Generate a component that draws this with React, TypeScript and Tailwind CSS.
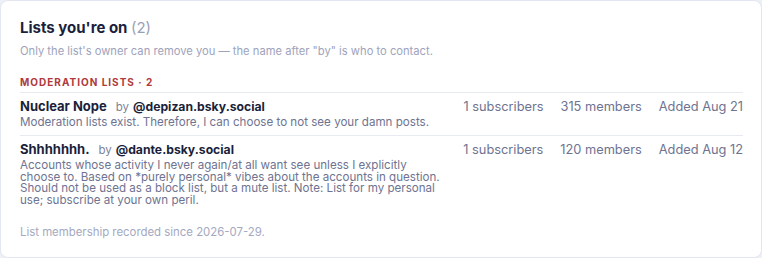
import React from "react";

const rows = [
  {
    name: "Nuclear Nope",
    by: "@depizan.bsky.social",
    desc: "Moderation lists exist. Therefore, I can choose to not see your damn posts.",
    subs: "1 subscribers",
    members: "315 members",
    added: "Added Aug 21",
  },
  {
    name: "Shhhhhhh.",
    by: "@dante.bsky.social",
    desc: "Accounts whose activity I never again/at all want see unless I explicitly choose to. Based on *purely personal* vibes about the accounts in question. Should not be used as a block list, but a mute list. Note: List for my personal use; subscribe at your own peril.",
    subs: "1 subscribers",
    members: "120 members",
    added: "Added Aug 12",
  },
];

export default function App() {
  return (
    <div className="w-[762px] h-[258px] bg-[#eef0f7]" style={{ fontFamily: "Inter, 'Noto Sans', sans-serif" }}>
      <div className="w-[762px] h-[258px] bg-white border border-[#e3e6f0] rounded-[8px] pl-[19px] pr-[18px] pt-[17px]">
        <h2 className="text-[15px] leading-[20px] font-bold text-[#1b1f3b]">
          Lists you're on <span className="font-normal text-[#9a9fb8]">(2)</span>
        </h2>
        <p className="mt-[6px] text-[11.2px] leading-[14px] text-[#9ea3bb]">
          Only the list's owner can remove you — the name after "by" is who to contact.
        </p>
        <div className="mt-[18px] text-[10px] leading-[12px] font-bold tracking-[0.1em] text-[#b0393b]">
          MODERATION LISTS · 2
        </div>
        <div className="mt-[4px]">
          {rows.map((r) => (
            <div key={r.name} className="border-t border-[#e8eaf1] flex pt-[5px] pb-[6px]">
              <div className="w-[426px]">
                <div className="flex items-baseline">
                  <span className="text-[13px] leading-[17px] font-bold text-[#1b1f3b]">{r.name}</span>
                  <span className="ml-[9px] text-[11.5px] text-[#7d8299]">by</span>
                  <span className="ml-[4px] text-[12.2px] font-bold text-[#1b1f3b]">{r.by}</span>
                </div>
                <p className="mt-[1px] text-[11.6px] leading-[11.5px] text-[#6e7391]">{r.desc}</p>
              </div>
              <div className="ml-auto flex gap-[17px] text-[12.8px] leading-[17px] text-[#6e7391]">
                <span>{r.subs}</span>
                <span>{r.members}</span>
                <span>{r.added}</span>
              </div>
            </div>
          ))}
        </div>
        <p className="mt-[13px] text-[11.4px] leading-[14px] text-[#a4a9c0]">
          List membership recorded since 2026-07-29.
        </p>
      </div>
    </div>
  );
}
